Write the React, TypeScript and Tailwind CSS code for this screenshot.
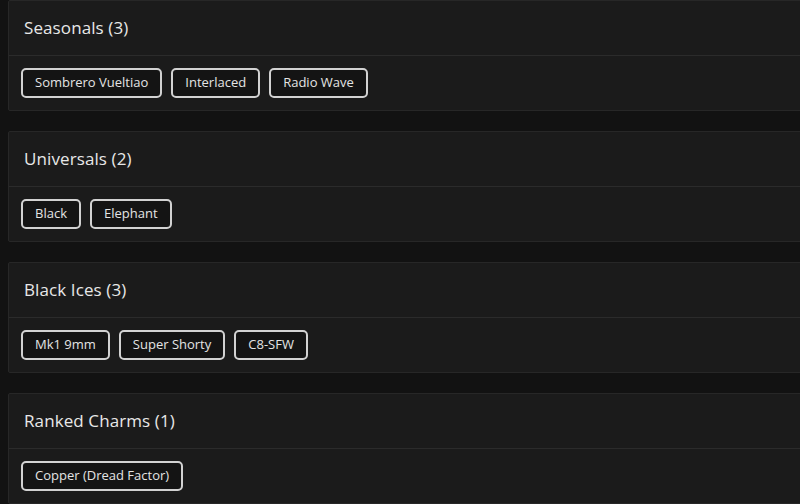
import React from "react";

const groups = [
  { title: "Seasonals (3)", items: ["Sombrero Vueltiao", "Interlaced", "Radio Wave"] },
  { title: "Universals (2)", items: ["Black", "Elephant"] },
  { title: "Black Ices (3)", items: ["Mk1 9mm", "Super Shorty", "C8-SFW"] },
  { title: "Ranked Charms (1)", items: ["Copper (Dread Factor)"] },
];

export default function App() {
  return (
    <div
      className="w-[800px] h-[504px] overflow-hidden bg-[#121212] pl-2"
      style={{ fontFamily: '"Open Sans", "Noto Sans", sans-serif' }}
    >
      <div className="flex flex-col gap-5 w-[810px]">
        {groups.map((g) => (
          <div key={g.title} className="border border-[#272727] bg-[#1b1b1b] rounded-[2px]">
            <div className="h-[55px] flex items-center pl-[15px] border-b border-[#2b2b2b]">
              <span className="text-[17px] text-[#e8e8e8] font-medium tracking-[0.1px]">{g.title}</span>
            </div>
            <div className="h-[54px] flex items-center gap-[9px] px-3">
              {g.items.map((it) => (
                <div
                  key={it}
                  className="h-[30px] flex items-center px-3 border-2 border-[#d2d2d2] rounded-[5px] bg-[#141414] text-[13px] text-[#e4e4e4]"
                >
                  {it}
                </div>
              ))}
            </div>
          </div>
        ))}
      </div>
    </div>
  );
}
